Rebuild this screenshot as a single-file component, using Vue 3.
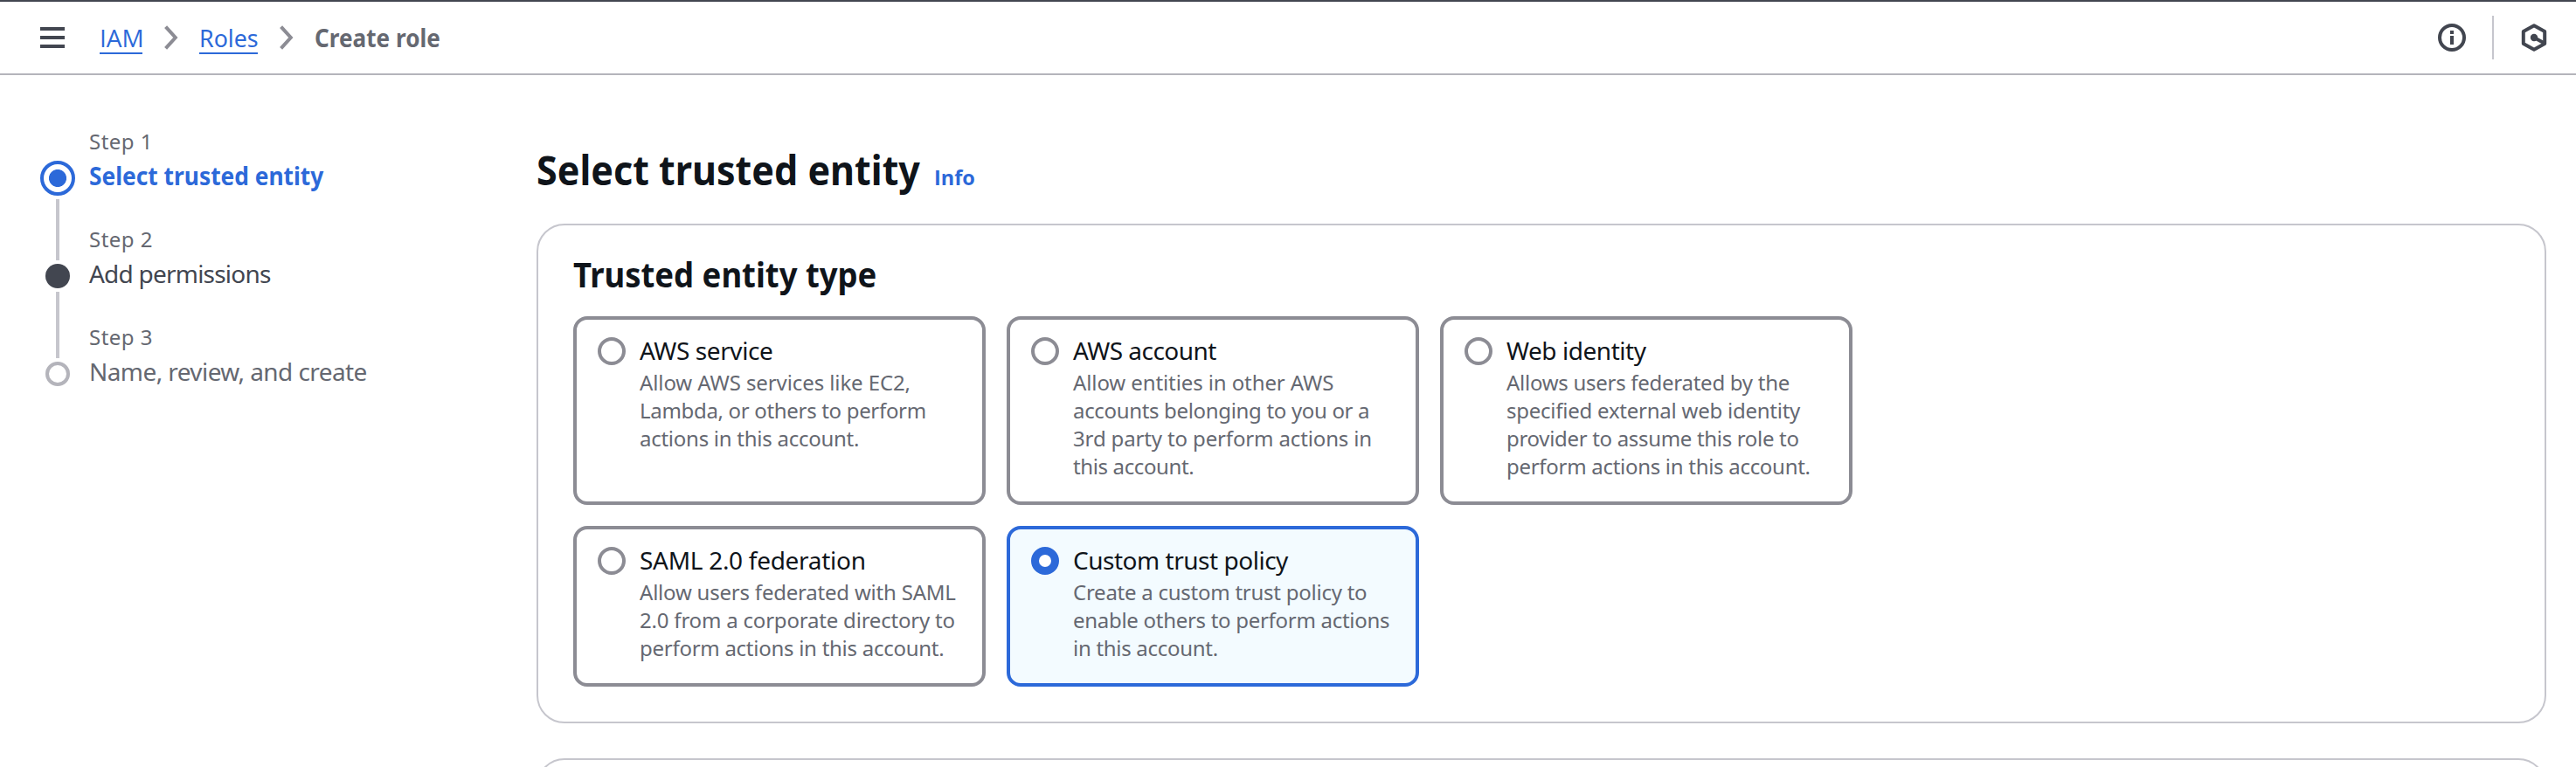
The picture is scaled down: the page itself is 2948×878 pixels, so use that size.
<script setup>
// Each text line carries its own tracking value, in pixels.
const steps = [
  { label: 'Step 1', labelTrack: 0.46, title: 'Select trusted entity', track: 0, state: 'active' },
  { label: 'Step 2', labelTrack: 0.46, title: 'Add permissions', track: -0.78, state: 'enabled' },
  { label: 'Step 3', labelTrack: 0.46, title: 'Name, review, and create', track: -0.58, state: 'disabled' },
]

const options = [
  {
    title: 'AWS service', track: -0.41,
    lines: [
      ['Allow AWS services like EC2,', -0.1],
      ['Lambda, or others to perform', -0.32],
      ['actions in this account.', -0.26],
    ],
  },
  {
    title: 'AWS account', track: -0.53,
    lines: [
      ['Allow entities in other AWS', -0.1],
      ['accounts belonging to you or a', -0.33],
      ['3rd party to perform actions in', -0.14],
      ['this account.', -0.37],
    ],
  },
  {
    title: 'Web identity', track: -0.46,
    lines: [
      ['Allows users federated by the', -0.27],
      ['specified external web identity', -0.24],
      ['provider to assume this role to', -0.32],
      ['perform actions in this account.', -0.29],
    ],
  },
  {
    title: 'SAML 2.0 federation', track: -0.29,
    lines: [
      ['Allow users federated with SAML', -0.21],
      ['2.0 from a corporate directory to', -0.2],
      ['perform actions in this account.', -0.27],
    ],
  },
  {
    title: 'Custom trust policy', track: -0.48, selected: true,
    lines: [
      ['Create a custom trust policy to', -0.25],
      ['enable others to perform actions', -0.29],
      ['in this account.', -0.29],
    ],
  },
]

const tracking = (value) => ({ letterSpacing: value + 'px' })
</script>

<template>
  <div class="page">
    <header class="topbar">
      <svg class="menu" width="28" height="24" viewBox="0 0 28 24">
        <path d="M0 2h28M0 12h28M0 22h28" stroke="#424650" stroke-width="4" />
      </svg>
      <nav class="crumbs">
        <a class="crumb iam"><span>IAM</span></a>
        <svg class="chevron" width="16" height="28" viewBox="0 0 16 28">
          <path d="M1.6 1.6L12.8 14L1.6 26.4" fill="none" stroke="#8c8c94" stroke-width="4" />
        </svg>
        <a class="crumb roles"><span>Roles</span></a>
        <svg class="chevron" width="16" height="28" viewBox="0 0 16 28">
          <path d="M1.6 1.6L12.8 14L1.6 26.4" fill="none" stroke="#8c8c94" stroke-width="4" />
        </svg>
        <span class="current">Create role</span>
      </nav>
      <div class="tools">
        <svg width="32" height="32" viewBox="0 0 32 32">
          <circle cx="16" cy="16" r="14" fill="none" stroke="#424650" stroke-width="4" />
          <path d="M14 8h4v4h-4zM14 14h4v10h-4z" fill="#424650" />
        </svg>
        <i class="rule"></i>
        <svg width="32" height="32" viewBox="0 0 32 32">
          <path d="M16 2.2L28.2 9v14L16 29.8 3.8 23V9z" fill="none" stroke="#424650" stroke-width="4" stroke-linejoin="round" />
          <path d="M16 16l11 6" stroke="#424650" stroke-width="4" />
          <circle cx="16" cy="16" r="4.2" fill="#424650" />
        </svg>
      </div>
    </header>

    <div class="body">
      <aside class="steps">
        <div class="rail">
          <i class="mark active"></i>
          <i class="link first"></i>
          <i class="mark enabled"></i>
          <i class="link"></i>
          <i class="mark disabled"></i>
        </div>
        <ol class="step-list">
          <li v-for="s in steps" :key="s.label" :class="s.state">
            <span class="step-label" :style="tracking(s.labelTrack)">{{ s.label }}</span>
            <span class="step-title" :style="tracking(s.track)">{{ s.title }}</span>
          </li>
        </ol>
      </aside>

      <main class="content">
        <div class="heading">
          <h1>Select trusted entity</h1>
          <a class="info">Info</a>
        </div>
        <section class="panel">
          <h2>Trusted entity type</h2>
          <div class="tiles">
            <div v-for="o in options" :key="o.title" class="tile" :class="{ selected: o.selected }">
              <i class="radio"></i>
              <div class="tile-text">
                <div class="tile-title" :style="tracking(o.track)">{{ o.title }}</div>
                <div class="tile-desc">
                  <span v-for="l in o.lines" :key="l[0]" :style="tracking(l[1])">{{ l[0] }}</span>
                </div>
              </div>
            </div>
          </div>
        </section>
        <section class="panel next"></section>
      </main>
    </div>
  </div>
</template>

<style>
html, body { margin: 0; background: #fff; overflow: hidden; }
</style>

<style scoped>
* { box-sizing: border-box; }
.page { height: 878px; overflow: hidden; font-family: "Noto Sans", "Open Sans", sans-serif; color: #0f141a; background: #fff; }
svg, i { display: block; flex: none; }

.topbar { height: 86px; border-top: 2px solid #424650; border-bottom: 2px solid #b4b4bb; display: flex; align-items: center; padding: 0 32px 0 46px; }
.crumbs { display: flex; align-items: center; margin-left: 40px; font-size: 28px; line-height: 40px; white-space: nowrap; }
.crumb { height: 38px; color: #2c69d9; border-bottom: 2px solid #2c69d9; }
.crumb span, .current, .info, h1, h2, .active .step-title { display: block; transform-origin: 0 50%; }
.crumb span { height: 36px; line-height: 38px; }
.iam { width: 49px; font-family: "Open Sans", sans-serif; }
.roles { width: 67px; }
.roles span { transform: scaleX(0.956); }
.chevron { margin: 0 24px 0 25px; }
.current { font-weight: 700; color: #656871; transform: scaleX(0.934); }
.tools { margin-left: auto; display: flex; align-items: center; }
.rule { width: 2px; height: 50px; background: #c6c6cd; margin: 0 30px; }

.body { display: flex; padding: 80px 34px 0 46px; }
.steps { width: 568px; flex: none; display: flex; }
.rail { width: 40px; display: flex; flex-direction: column; align-items: center; gap: 4px; padding-top: 18px; }
.mark { width: 28px; height: 28px; border-radius: 50%; }
.mark.active { width: 40px; height: 40px; border: 4px solid #2c69d9; background: radial-gradient(circle, #2c69d9 9.6px, #fff 10.4px); }
.mark.enabled { background: #424650; }
.mark.disabled { border: 4px solid #b4b4bb; }
.link { width: 4px; height: 76px; background: #c6c6cd; }
.link.first { height: 70px; }
.step-list { list-style: none; margin: -20px 0 0 16px; padding: 0; }
.step-list li { height: 112px; white-space: nowrap; }
.step-label { display: block; font-size: 24px; line-height: 32px; color: #656871; margin-bottom: 3px; }
.step-title { display: block; font-size: 28px; line-height: 40px; color: #656871; }
.active .step-title { color: #2c69d9; font-weight: 700; transform: scaleX(0.94); }
.enabled .step-title { color: #424650; }

.content { flex: 1; }
.heading { display: flex; height: 56px; white-space: nowrap; margin-bottom: 34px; }
h1 { margin: 0; width: 455px; font-size: 46px; line-height: 56px; font-weight: 700; transform: scaleX(0.936); }
.info { font: 700 24px/32px "Open Sans", sans-serif; color: #2c69d9; margin-top: 21px; transform: scaleX(0.978); }
.panel { border: 2px solid #c6c6cd; border-radius: 32px; padding: 32px 40px 40px; }
.panel.next { margin-top: 40px; height: 200px; }
h2 { margin: 0 0 24px; font-size: 38.5px; line-height: 48px; font-weight: 700; transform: scaleX(0.947); }
.tiles { display: grid; grid-template-columns: repeat(3, 472px); grid-template-rows: 216px 184px; gap: 24px; }
.tile { border: 4px solid #8c8c94; border-radius: 16px; display: flex; gap: 16px; padding: 15px 20px; }
.tile.selected { border-color: #2c69d9; background: #f3fbff; }
.radio { width: 32px; height: 32px; margin: 5px 0 0 4px; border: 4px solid #8c8c94; border-radius: 50%; background: #fff; }
.selected .radio { border: 9.5px solid #2c69d9; }
.tile-text { white-space: nowrap; }
.tile-title { font-size: 28px; line-height: 40px; }
.tile-desc { margin-top: 1px; font-size: 24px; line-height: 32px; color: #656871; }
.tile-desc span { display: block; }
</style>
